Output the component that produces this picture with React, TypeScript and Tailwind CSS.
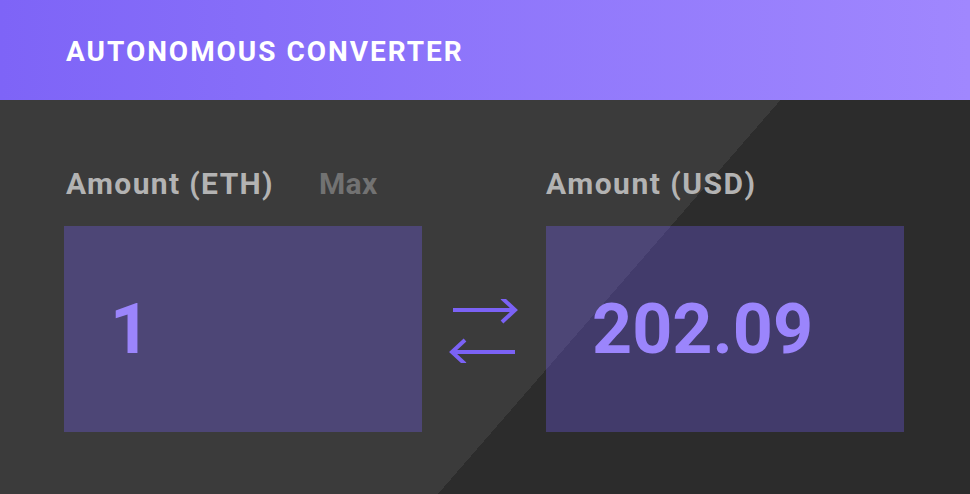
import React from 'react';

const SwapArrows = () => (
  <svg width="72" height="64" viewBox="0 0 72 64" fill="none" stroke="#7b62f5" strokeWidth="4">
    <path d="M4 11 H66" />
    <path d="M53 -1 L66 11 L53 23" />
    <path d="M3 53 H66" />
    <path d="M16 41 L3 53 L16 65" />
  </svg>
);

const ValueBox = ({ value }: { value: string }) => (
  <div className="h-[206px] w-[358px] bg-[rgba(119,96,255,0.3)] flex items-center pl-[46px]">
    <span className="text-[70px] font-bold leading-none text-[#9b85fc]">{value}</span>
  </div>
);

export default function App() {
  return (
    <div className="w-[970px] h-[494px] overflow-hidden" style={{ fontFamily: 'Roboto, "Liberation Sans", sans-serif' }}>
      <header className="h-[100px] bg-gradient-to-r from-[#7e64f7] to-[#a087fe] flex items-center pl-[66px]">
        <h1 className="text-white text-[28px] font-bold tracking-[0.07em] leading-none mt-[3px]">AUTONOMOUS CONVERTER</h1>
      </header>

      <main className="h-[394px] bg-[linear-gradient(131deg,#3b3b3b_589px,#2c2c2c_589px)] flex px-[64px] pt-[68px]">
        <section className="flex flex-col w-[358px]">
          <div className="flex items-center gap-[45px] pl-[2px] h-[32px] text-[30px] font-bold leading-none">
            <span className="text-[#b3b3b3] tracking-[0.045em]">Amount (ETH)</span>
            <span className="text-[#727272] tracking-[0.01em]">Max</span>
          </div>
          <div className="mt-[26px]">
            <ValueBox value="1" />
          </div>
        </section>

        <div className="w-[124px] flex justify-center items-start pt-[131px] pl-[2px]">
          <SwapArrows />
        </div>

        <section className="flex flex-col w-[358px]">
          <div className="flex items-center h-[32px] text-[30px] font-bold leading-none tracking-[0.05em]">
            <span className="text-[#b3b3b3]">Amount (USD)</span>
          </div>
          <div className="mt-[26px]">
            <ValueBox value="202.09" />
          </div>
        </section>
      </main>
    </div>
  );
}
